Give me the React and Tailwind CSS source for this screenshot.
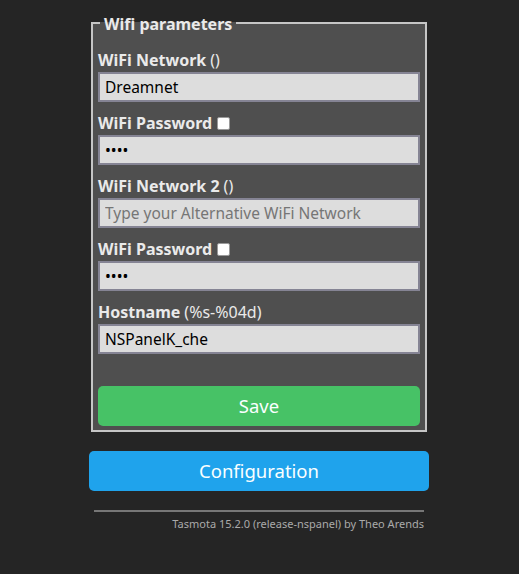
import React from 'react';

const FIELDS = [
  { label: 'WiFi Network', hint: '()', value: 'Dreamnet' },
  { label: 'WiFi Password', check: true, value: 'abcd', password: true },
  { label: 'WiFi Network 2', hint: '()', value: '', placeholder: 'Type your Alternative WiFi Network' },
  { label: 'WiFi Password', check: true, value: 'abcd', password: true },
  { label: 'Hostname', hint: '(%s-%04d)', value: 'NSPanelK_che' },
];

function Field({ f, first }) {
  return (
    <div className={first ? '' : 'mt-[11px]'}>
      <div className="flex items-center h-[20px] leading-[20px]">
        <b className="font-bold">{f.label}</b>
        {f.hint && <span className="ml-[4px]">{f.hint}</span>}
        {f.check && <span className="ml-[5px] w-[13px] h-[13px] bg-white border border-[#9a9a9a] rounded-[2px]" />}
      </div>
      <input
        readOnly
        type={f.password ? 'password' : 'text'}
        value={f.value}
        placeholder={f.placeholder}
        className="mt-[2px] block w-full h-[30px] px-[5px] bg-[#dddddd] text-black text-[15.5px] border-2 border-[#858494] outline-none placeholder:text-[#767676]"
      />
    </div>
  );
}

export default function App() {
  return (
    <div className="min-h-screen bg-[#252525] text-[#eaeaea] text-[16px] flex justify-center pr-[1px] font-['Noto_Sans',sans-serif]">
      <div className="w-[340px] pt-[13px]">
        <fieldset className="mx-[2px] border-2 border-[#c6c6c6] bg-[#4f4f4f] px-[5px] pb-[4px] m-0">
          <legend className="ml-[2px] px-[4px] pt-[2px] font-bold leading-[18px]">Wifi parameters</legend>
          <div className="pt-[17px]">
            {FIELDS.map((f, i) => <Field key={i} f={f} first={i === 0} />)}
            <button className="mt-[32px] w-full h-[40px] rounded-[5px] bg-[#47c266] text-[#faffff] text-[18.5px]">Save</button>
          </div>
        </fieldset>
        <button className="mt-[19px] w-full h-[40px] rounded-[5px] bg-[#1fa3ec] text-[#faffff] text-[18.5px]">Configuration</button>
        <div className="mt-[19px] mx-[5px] h-[2px] bg-[#777777]" />
        <div className="mt-[4px] mr-[5px] text-right text-[11px] leading-[16px] text-[#aaaaaa]">
          Tasmota 15.2.0 (release-nspanel) by Theo Arends
        </div>
      </div>
    </div>
  );
}
